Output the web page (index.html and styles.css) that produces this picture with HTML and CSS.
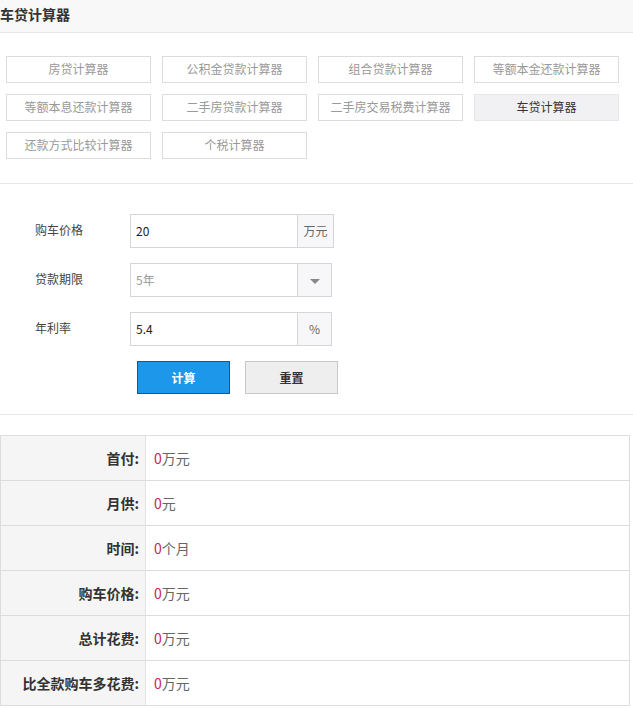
FILE: index.html
```html
<!DOCTYPE html>
<html lang="zh-CN">
<head>
  <meta charset="UTF-8" />
  <title>车贷计算器</title>
  <meta name="viewport" content="width=device-width, initial-scale=1.0"/>
  <link rel="stylesheet" href="styles.css">
</head>
<body>
  <div class="page-head">车贷计算器</div>

  <div class="tabs">
    <a class="tab">房贷计算器</a>
    <a class="tab">公积金贷款计算器</a>
    <a class="tab">组合贷款计算器</a>
    <a class="tab">等额本金还款计算器</a>
    <a class="tab">等额本息还款计算器</a>
    <a class="tab">二手房贷款计算器</a>
    <a class="tab">二手房交易税费计算器</a>
    <a class="tab active">车贷计算器</a>
    <a class="tab">还款方式比较计算器</a>
    <a class="tab">个税计算器</a>
  </div>

  <div class="form">
    <div class="form-row">
      <label for="price">购车价格</label>
      <div class="field">
        <input type="text" id="price" value="20" />
        <span class="addon wide">万元</span>
      </div>
    </div>
    <div class="form-row">
      <label for="term">贷款期限</label>
      <div class="field">
        <span class="select-val" id="term">5年</span>
        <span class="addon"><span class="caret"></span></span>
      </div>
    </div>
    <div class="form-row">
      <label for="rate">年利率</label>
      <div class="field">
        <input type="text" id="rate" value="5.4" />
        <span class="addon">%</span>
      </div>
    </div>
    <div class="actions">
      <button class="btn primary">计算</button>
      <button class="btn">重置</button>
    </div>
  </div>

  <table class="result">
    <tr><th>首付:</th><td><em>0</em>万元</td></tr>
    <tr><th>月供:</th><td><em>0</em>元</td></tr>
    <tr><th>时间:</th><td><em>0</em>个月</td></tr>
    <tr><th>购车价格:</th><td><em>0</em>万元</td></tr>
    <tr><th>总计花费:</th><td><em>0</em>万元</td></tr>
    <tr><th>比全款购车多花费:</th><td><em>0</em>万元</td></tr>
  </table>
</body>
</html>
```

FILE: styles.css
```css
body {
  margin: 0;
  background: #fff;
  color: #333;
  font-family: "Noto Sans CJK SC", "Liberation Sans", sans-serif;
  font-size: 12px;
}
.page-head {
  height: 32px;
  line-height: 28px;
  background: #f8f8f8;
  border-bottom: 1px solid #e6e6e6;
  font-size: 14px;
  font-weight: bold;
  color: #333;
}
.tabs {
  display: grid;
  grid-template-columns: repeat(4, 145px);
  column-gap: 11px;
  row-gap: 11px;
  padding: 23px 0 24px 6px;
  border-bottom: 1px solid #e6e6e6;
}
.tab {
  display: block;
  height: 27px;
  line-height: 24px;
  box-sizing: border-box;
  border: 1px solid #dcdcdc;
  text-align: center;
  color: #999;
  font-size: 12px;
}
.tab.active {
  background: #f1f1f3;
  border-color: #e6e6e6;
  color: #333;
}
.form {
  padding: 30px 0 20px 0;
  border-bottom: 1px solid #e6e6e6;
}
.form-row {
  display: flex;
  align-items: center;
  margin-bottom: 15px;
}
.form-row label {
  width: 95px;
  padding-left: 35px;
  color: #444;
  font-size: 12px;
  position: relative;
  top: -2px;
}
.field {
  display: flex;
  height: 34px;
  box-sizing: border-box;
  border: 1px solid #d6d6d6;
}
.field input,
.select-val {
  width: 166px;
  box-sizing: border-box;
  border: none;
  outline: none;
  padding: 0 5px;
  font-family: inherit;
  font-size: 12px;
  color: #222;
  line-height: 32px;
  background: #fff;
}
.select-val {
  color: #999;
}
.addon {
  width: 33px;
  border-left: 1px solid #d6d6d6;
  background: #f7f7f9;
  color: #666;
  text-align: center;
  line-height: 32px;
  font-size: 12px;
}
.addon.wide {
  width: 35px;
}
.caret {
  display: inline-block;
  width: 0;
  height: 0;
  border-left: 5px solid transparent;
  border-right: 5px solid transparent;
  border-top: 5px solid #888;
  vertical-align: middle;
}
.actions {
  display: flex;
  gap: 15px;
  padding-left: 137px;
}
.btn {
  width: 93px;
  height: 33px;
  border: 1px solid #c8c8c8;
  background: #eee;
  color: #333;
  font-family: inherit;
  font-size: 12px;
  font-weight: bold;
  padding: 0;
}
.btn.primary {
  background: #1c97ea;
  border-color: #17588c;
  color: #fff;
}
.result {
  margin-top: 20px;
  width: 630px;
  border-collapse: collapse;
  border: 1px solid #ddd;
}
.result th,
.result td {
  height: 44px;
  padding: 0;
  border-top: 1px solid #ddd;
  font-size: 14px;
}
.result th {
  width: 138px;
  padding-right: 6px;
  text-align: right;
  background: #f5f5f5;
  border-right: 1px solid #e2e2e2;
  color: #333;
}
.result td {
  padding-left: 8px;
  color: #666;
}
.result em {
  font-style: normal;
  color: #c7254e;
}
```
